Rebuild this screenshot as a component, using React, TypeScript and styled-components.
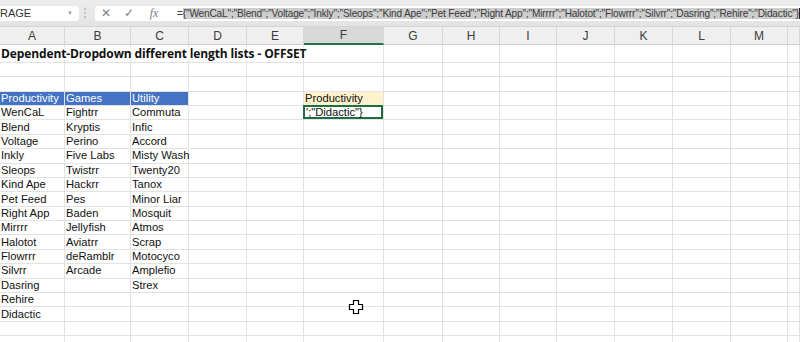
import React from 'react';
import styled, { createGlobalStyle } from 'styled-components';

const GlobalStyle = createGlobalStyle`
  html, body {
    margin: 0;
    padding: 0;
    background: #ffffff;
  }
  body {
    font-family: "Liberation Sans", Arial, sans-serif;
    overflow: hidden;
  }
`;

const Screen = styled.div`
  position: relative;
  width: 800px;
  height: 342px;
  overflow: hidden;
  background: #ffffff;
`;

const FormulaBar = styled.div`
  height: 27px;
  display: flex;
  align-items: center;
  background: linear-gradient(#ececec, #e3e3e3);
  border-bottom: 1px solid #d4d4d4;
  box-sizing: border-box;
`;

const NameBox = styled.div`
  flex-shrink: 0;
  width: 79px;
  height: 15px;
  background: #ffffff;
  display: flex;
  align-items: center;
  justify-content: space-between;
  padding-right: 6px;
  box-sizing: border-box;
  font-size: 11px;
  color: #333;
  border-radius: 0 3px 3px 0;
`;

const Caret = styled.span`
  font-size: 6px;
  color: #999;
`;

const Grip = styled.span`
  flex-shrink: 0;
  width: 2px;
  height: 10px;
  border-left: 2px dotted #c0c0c0;
  margin: 0 7px 0 5px;
`;

const FormulaInput = styled.div`
  flex: 1;
  min-width: 0;
  height: 15px;
  background: #ffffff;
  display: flex;
  align-items: center;
  border-radius: 3px 0 0 3px;
  white-space: nowrap;
  overflow: hidden;
`;

const BarIcon = styled.span<{ $w: number }>`
  flex-shrink: 0;
  width: ${({ $w }) => $w}px;
  display: inline-flex;
  justify-content: center;
  color: #808080;
  font-size: 12px;
`;

const Fx = styled.span`
  flex-shrink: 0;
  font-family: "Liberation Serif", serif;
  font-style: italic;
  font-size: 12px;
  color: #808080;
  width: 26px;
  text-align: center;
`;

const FormulaText = styled.span`
  font-size: 10.1px;
  letter-spacing: -0.16px;
  color: #3a3a3a;
  margin-left: 10px;
`;

const Selected = styled.span`
  background: #cdcdcd;
  border-right: 1px solid #222;
`;

const Sheet = styled.div`
  display: grid;
  grid-template-columns: 65px 66px 58px 58px 57px 80px 59px 57px 57px 58px 58px 58px 57px 12px;
  grid-template-rows: 18px 17.8px;
  grid-auto-rows: 14.4px;
`;

const ColHead = styled.div<{ $active?: boolean }>`
  background: ${({ $active }) => ($active ? '#d9d9d9' : '#efefef')};
  border-right: 1px solid #d6d6d6;
  border-bottom: ${({ $active }) => ($active ? '2px solid #217346' : '1px solid #d0d0d0')};
  box-sizing: border-box;
  display: flex;
  align-items: center;
  justify-content: center;
  font-size: 12px;
  color: #3c3c3c;
`;

const Cell = styled.div<{ $fill?: string; $color?: string }>`
  position: relative;
  border-right: 1px solid #e2e2e2;
  border-bottom: 1px solid #e2e2e2;
  box-sizing: border-box;
  background: ${({ $fill }) => $fill || 'transparent'};
  color: ${({ $color }) => $color || '#111'};
  font-size: 11.2px;
  line-height: 13px;
  padding-left: 1px;
  white-space: nowrap;
  overflow: visible;
  display: flex;
  align-items: center;
`;

const Title = styled.span`
  position: relative;
  z-index: 1;
  font-family: "Open Sans", sans-serif;
  font-weight: 700;
  font-size: 12px;
  letter-spacing: -0.12px;
  color: #111;
  background: #fff;
`;

const EditCell = styled.div`
  position: absolute;
  inset: -1px 0 0 -1px;
  border: 2px solid #1e6e43;
  background: #fff;
  display: flex;
  align-items: center;
  padding-left: 1px;
  font-size: 11.2px;
  color: #111;
`;

const Cursor = styled.svg`
  position: absolute;
  left: 348px;
  top: 299px;
`;

const cols = ['A', 'B', 'C', 'D', 'E', 'F', 'G', 'H', 'I', 'J', 'K', 'L', 'M', ''];

const lists = [
  ['Productivity', 'Games', 'Utility'],
  ['WenCaL', 'Fightrr', 'Commuta'],
  ['Blend', 'Kryptis', 'Infic'],
  ['Voltage', 'Perino', 'Accord'],
  ['Inkly', 'Five Labs', 'Misty Wash'],
  ['Sleops', 'Twistrr', 'Twenty20'],
  ['Kind Ape', 'Hackrr', 'Tanox'],
  ['Pet Feed', 'Pes', 'Minor Liar'],
  ['Right App', 'Baden', 'Mosquit'],
  ['Mirrrr', 'Jellyfish', 'Atmos'],
  ['Halotot', 'Aviatrr', 'Scrap'],
  ['Flowrrr', 'deRamblr', 'Motocyco'],
  ['Silvrr', 'Arcade', 'Amplefio'],
  ['Dasring', '', 'Strex'],
  ['Rehire', '', ''],
  ['Didactic', '', ''],
];

const formula =
  '{"WenCaL";"Blend";"Voltage";"Inkly";"Sleops";"Kind Ape";"Pet Feed";"Right App";"Mirrrr";"Halotot";"Flowrrr";"Silvrr";"Dasring";"Rehire";"Didactic"}';

const TOTAL_ROWS = 21;

const App = () => {
  const renderRow = (r: number) =>
    cols.map((_, c) => {
      const key = `${r}-${c}`;
      if (r === 1 && c === 0) {
        return (
          <Cell key={key}>
            <Title>Dependent-Dropdown different length lists - OFFSET</Title>
          </Cell>
        );
      }
      const li = r - 4;
      if (li >= 0 && li < lists.length && c < 3) {
        const head = li === 0;
        return (
          <Cell key={key} $fill={head ? '#4472c4' : undefined} $color={head ? '#ffffff' : undefined}>
            {lists[li][c]}
          </Cell>
        );
      }
      if (r === 4 && c === 5) {
        return (
          <Cell key={key} $fill="#fff2cc">
            Productivity
          </Cell>
        );
      }
      if (r === 5 && c === 5) {
        return (
          <Cell key={key}>
            <EditCell>';"Didactic"{'}'}</EditCell>
          </Cell>
        );
      }
      return <Cell key={key} />;
    });

  return (
    <Screen>
      <GlobalStyle />
      <FormulaBar>
        <NameBox>
          RAGE
          <Caret>▼</Caret>
        </NameBox>
        <Grip />
        <FormulaInput>
          <BarIcon $w={22}>✕</BarIcon>
          <BarIcon $w={24}>✓</BarIcon>
          <Fx>fx</Fx>
          <FormulaText>
            =<Selected>{formula}</Selected>
          </FormulaText>
        </FormulaInput>
      </FormulaBar>
      <Sheet>
        {cols.map((c, i) => (
          <ColHead key={i} $active={c === 'F'}>
            {c}
          </ColHead>
        ))}
        {Array.from({ length: TOTAL_ROWS }, (_, i) => renderRow(i + 1))}
      </Sheet>
      <Cursor width="16" height="16" viewBox="0 0 16 16">
        <path
          d="M5.5 1.5h5v4h4v5h-4v4h-5v-4h-4v-5h4z"
          fill="#ffffff"
          stroke="#000000"
          strokeWidth="1.2"
        />
      </Cursor>
    </Screen>
  );
};

export default App;
